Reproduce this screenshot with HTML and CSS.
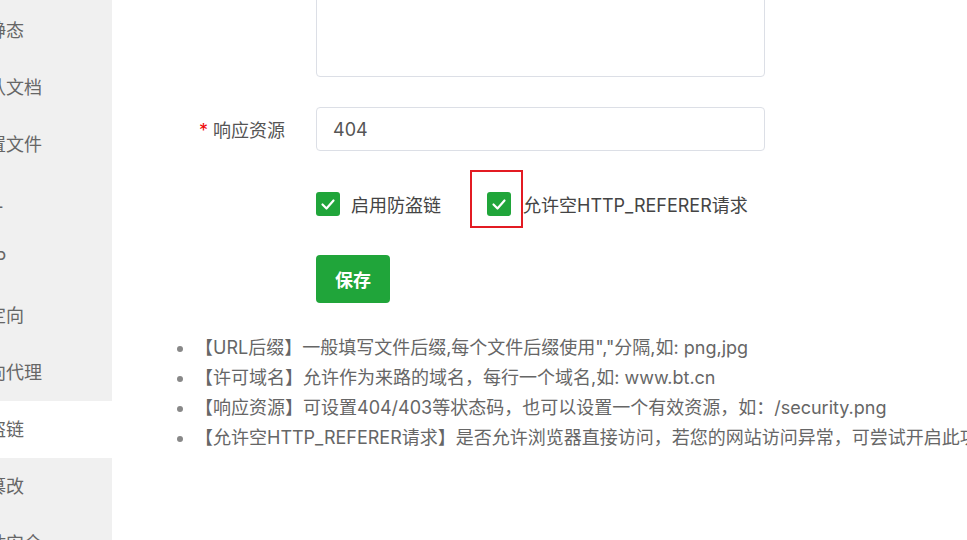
FILE: index.html
```html
<!DOCTYPE html>
<html lang="zh-CN">
<head>
  <meta charset="UTF-8" />
  <title>防盗链</title>
  <link rel="stylesheet" href="styles.css">
</head>
<body>
  <div class="sidebar">
    <div class="menu-item">伪静态</div>
    <div class="menu-item">默认文档</div>
    <div class="menu-item">配置文件</div>
    <div class="menu-item">SSL</div>
    <div class="menu-item">PHP</div>
    <div class="menu-item">重定向</div>
    <div class="menu-item">反向代理</div>
    <div class="menu-item active">防盗链</div>
    <div class="menu-item">防篡改</div>
    <div class="menu-item">网站安全</div>
  </div>

  <div class="main">
    <div class="form">
      <div class="form-row">
        <label class="form-label"></label>
        <textarea class="form-textarea"></textarea>
      </div>

      <div class="form-row row-input">
        <label class="form-label"><span class="required">*</span> 响应资源</label>
        <input class="form-input" type="text" value="404">
      </div>

      <div class="form-row row-check">
        <span></span>
        <div class="checks">
          <label class="check">
            <span class="check-box">
              <svg viewBox="0 0 24 24" width="24" height="24"><polyline points="6.5,12.5 10.5,16.5 17.5,8.5" fill="none" stroke="#fff" stroke-width="2.2" stroke-linecap="round" stroke-linejoin="round"/></svg>
            </span>
            启用防盗链
          </label>
          <label class="check check-marked">
            <span class="check-box">
              <svg viewBox="0 0 24 24" width="24" height="24"><polyline points="6.5,12.5 10.5,16.5 17.5,8.5" fill="none" stroke="#fff" stroke-width="2.2" stroke-linecap="round" stroke-linejoin="round"/></svg>
            </span>
            允许空HTTP_REFERER请求
            <span class="mark-box"></span>
          </label>
        </div>
      </div>

      <div class="form-row row-btn">
        <span></span>
        <div><button class="btn-save">保存</button></div>
      </div>
    </div>

    <ul class="tips">
      <li>【URL后缀】一般填写文件后缀,每个文件后缀使用","分隔,如: png,jpg</li>
      <li>【许可域名】允许作为来路的域名，每行一个域名,如: www.bt.cn</li>
      <li>【响应资源】可设置404/403等状态码，也可以设置一个有效资源，如：/security.png</li>
      <li>【允许空HTTP_REFERER请求】是否允许浏览器直接访问，若您的网站访问异常，可尝试开启此功能</li>
    </ul>
  </div>
</body>
</html>
```

FILE: styles.css
```css
body {
  margin: 0;
  background: #fff;
  font-family: Inter, "Noto Sans CJK SC", sans-serif;
  font-size: 18px;
  color: #555;
  display: flex;
  height: 540px;
  overflow: hidden;
}

.sidebar {
  width: 112px;
  flex-shrink: 0;
  background: #f0f0f0;
  padding-top: 2px;
  overflow: hidden;
}

.menu-item {
  height: 57px;
  line-height: 57px;
  text-indent: -30px;
  white-space: nowrap;
  color: #666;
}

.menu-item.active {
  background: #fff;
}

.main {
  flex: 1;
  min-width: 0;
}

.form {
  margin-top: -23px;
}

.form-row {
  display: grid;
  grid-template-columns: 204px 449px;
  align-items: center;
}

.form-label {
  text-align: right;
  padding-right: 31px;
  color: #555;
}

.required {
  color: #ef0808;
}

.form-textarea {
  height: 100px;
  box-sizing: border-box;
  border: 1px solid #dcdfe6;
  border-radius: 4px;
  resize: none;
  margin: 0;
  outline: none;
}

.row-input {
  margin-top: 30px;
}

.form-input {
  height: 44px;
  box-sizing: border-box;
  border: 1px solid #dcdfe6;
  border-radius: 4px;
  padding: 0 16px;
  font-family: inherit;
  font-size: 18px;
  color: #555;
  outline: none;
}

.row-check {
  margin-top: 41px;
}

.checks {
  display: flex;
  align-items: center;
  height: 24px;
}

.check {
  display: flex;
  align-items: center;
  position: relative;
  white-space: nowrap;
  color: #444;
}

.check-box {
  width: 24px;
  height: 24px;
  background: #20a53a;
  border-radius: 3px;
  margin-right: 11px;
  display: flex;
}

.check-marked {
  margin-left: 46px;
}

.check-marked .check-box {
  margin-right: 12px;
}

.mark-box {
  position: absolute;
  left: -17px;
  top: -21px;
  width: 49px;
  height: 54px;
  border: 2px solid #e31b23;
}

.row-btn {
  margin-top: 39px;
}

.btn-save {
  width: 74px;
  height: 48px;
  background: #20a53a;
  color: #fff;
  border: none;
  border-radius: 4px;
  font-family: inherit;
  font-size: 18px;
  font-weight: bold;
  cursor: pointer;
}

.tips {
  margin: 30px 0 0 83px;
  padding: 0;
  color: #666;
  white-space: nowrap;
}

.tips li {
  line-height: 30px;
}

.tips li::marker {
  color: #888;
}
```
